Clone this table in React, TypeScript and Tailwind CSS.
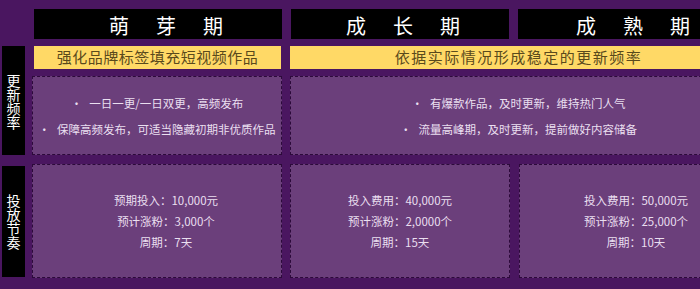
import React from "react";

const stages = [
  { title: ["萌", "芽", "期"], pad: "pl-[16px]", width: "w-[248px]" },
  { title: ["成", "长", "期"], pad: "pl-[6px]", width: "w-[218px]" },
  { title: ["成", "熟", "期"], pad: "pl-[2px]", width: "w-[228px]" },
];

const budget = [
  { lines: ["预期投入：10,000元", "预计涨粉：3,000个", "周期：7天"], cls: "w-[250px] pl-[18px]" },
  { lines: ["投入费用：40,000元", "预计涨粉：2,0000个", "周期：15天"], cls: "w-[220px]" },
  { lines: ["投入费用：50,000元", "预计涨粉：25,000个", "周期：10天"], cls: "w-[228px] pl-[6px]" },
];

const SideLabel = ({ text, className }: { text: string; className: string }) => (
  <div className={`w-[23px] bg-black text-white flex items-center justify-center ${className}`}>
    <span className="[writing-mode:vertical-rl] text-[14px] leading-[16px]">{text}</span>
  </div>
);

const Bullet = ({ children }: { children: React.ReactNode }) => (
  <p className="leading-[26px]">
    <span className="mr-[7px]">•</span>
    {children}
  </p>
);

const App = () => {
  return (
    <div className="w-[700px] h-[289px] overflow-hidden bg-[#4a1660] font-['Noto_Sans_CJK_SC','Microsoft_YaHei',sans-serif]">
      <div className="w-[760px] pt-[9px]">
        {/* stage headers */}
        <div className="flex ml-[34px] gap-[9px]">
          {stages.map((s, i) => (
            <div
              key={i}
              className={`${s.width} ${s.pad} h-[30px] bg-black text-white text-[20px] flex items-center justify-center gap-[27px] pt-[4px]`}
            >
              {s.title.map((ch, j) => (
                <span key={j}>{ch}</span>
              ))}
            </div>
          ))}
        </div>

        {/* update frequency */}
        <div className="flex mt-[7px]">
          <SideLabel text="更新频率" className="ml-[2px] h-[109px] pt-[3px]" />
          <div className="ml-[7px] flex flex-col">
            <div className="flex ml-[2px] gap-[9px] h-[23px] text-[15px] text-[#5a4a1c]">
              <div className="w-[247px] bg-[#ffd966] flex items-center justify-center tracking-[0.5px]">
                强化品牌标签填充短视频作品
              </div>
              <div className="w-[457px] bg-[#ffd966] flex items-center justify-center tracking-[1.5px]">
                依据实际情况形成稳定的更新频率
              </div>
            </div>
            <div className="flex mt-[7px] gap-[8px] h-[79px] text-[11.5px] text-[#eadff0]">
              <div className="w-[250px] bg-[#6b3f7b] border border-dashed border-[#2c0a3a] flex flex-col items-center justify-center">
                <Bullet>一日一更/一日双更，高频发布</Bullet>
                <Bullet>保障高频发布，可适当隐藏初期非优质作品</Bullet>
              </div>
              <div className="w-[457px] bg-[#6b3f7b] border border-dashed border-[#2c0a3a] flex flex-col items-center justify-center">
                <Bullet>有爆款作品，及时更新，维持热门人气</Bullet>
                <Bullet>流量高峰期，及时更新，提前做好内容储备</Bullet>
              </div>
            </div>
          </div>
        </div>

        {/* budget rhythm */}
        <div className="flex mt-[9px]">
          <SideLabel text="投放节奏" className="ml-[2px] mt-[2px] h-[111px]" />
          <div className="ml-[7px] flex gap-[8px] h-[114px] text-[11.5px] text-[#eadff0]">
            {budget.map((b, i) => (
              <div
                key={i}
                className={`${b.cls} bg-[#6b3f7b] border border-dashed border-[#2c0a3a] flex flex-col items-center justify-center leading-[21px] ${i === 2 ? "ml-[1px]" : ""}`}
              >
                {b.lines.map((l, j) => (
                  <p key={j}>{l}</p>
                ))}
              </div>
            ))}
          </div>
        </div>
      </div>
    </div>
  );
};

export default App;
